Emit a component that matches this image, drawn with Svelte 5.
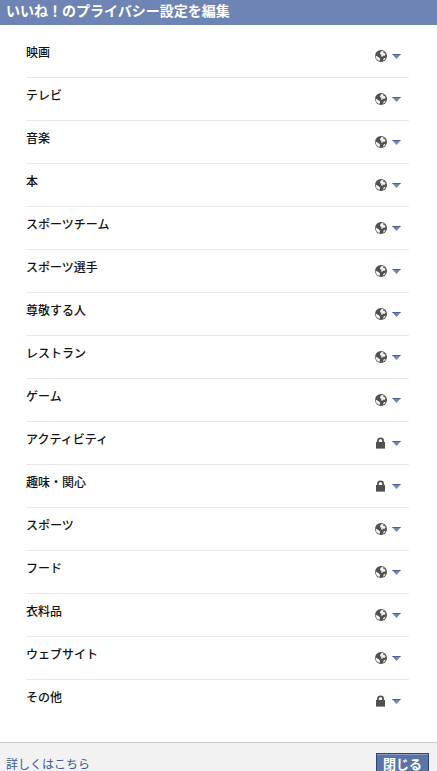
<script>
    const categories = [
        { name: "映画", audience: "public" },
        { name: "テレビ", audience: "public" },
        { name: "音楽", audience: "public" },
        { name: "本", audience: "public" },
        { name: "スポーツチーム", audience: "public" },
        { name: "スポーツ選手", audience: "public" },
        { name: "尊敬する人", audience: "public" },
        { name: "レストラン", audience: "public" },
        { name: "ゲーム", audience: "public" },
        { name: "アクティビティ", audience: "private" },
        { name: "趣味・関心", audience: "private" },
        { name: "スポーツ", audience: "public" },
        { name: "フード", audience: "public" },
        { name: "衣料品", audience: "public" },
        { name: "ウェブサイト", audience: "public" },
        { name: "その他", audience: "private" },
    ];
</script>

<div class="dialog">
    <h2>いいね！のプライバシー設定を編集</h2>
    <ul>
        {#each categories as category}
            <li>
                <span class="name">{category.name}</span>
                <button class="selector">
                    {#if category.audience === "public"}
                        <svg width="12" height="12" viewBox="0 0 12 12">
                            <circle cx="6" cy="6" r="6" fill="#505050" />
                            <path
                                d="M5.2 2.6 6.6 1 8.6 1.2 8 2.4 9.6 3 10.6 4.6 9.4 6 7.6 5.6 7.4 7 6 6.2 6.4 4.6 5 4.2Z M.5 5.6 2 6.2 4 7.4 5.2 8.8 4.4 11 2.6 10.2 1.2 8.4Z M8.6 8.4 10.6 7.8 9.6 9.8 8 10.8Z"
                                fill="#f4f4f4"
                            />
                        </svg>
                    {:else}
                        <svg width="12" height="12" viewBox="0 0 12 12">
                            <path d="M3 6V3.3Q3 1.4 5.5 1.4T8 3.3V6" fill="none" stroke="#505050" stroke-width="1.8" />
                            <rect x="1" y="5" width="9" height="6.6" fill="#505050" />
                        </svg>
                    {/if}
                    <svg width="9" height="5" viewBox="0 0 9 5">
                        <path d="M0 0H9L4.5 5Z" fill="#7085b5" />
                        <path d="M0 0H9L8 1H1Z" fill="#4a639c" />
                    </svg>
                </button>
            </li>
        {/each}
    </ul>
    <footer>
        <a href="#help">詳しくはこちら</a>
        <button class="close">閉じる</button>
    </footer>
</div>

<style>
    :global(body) {
        margin: 0;
        overflow: hidden;
    }

    .dialog {
        display: flex;
        flex-direction: column;
        box-sizing: border-box;
        height: 771px;
        overflow: hidden;
        background: #fff;
        color: #111;
        font-family: "Noto Sans CJK JP", sans-serif;
        font-size: 12px;
    }

    h2 {
        flex: none;
        height: 25px;
        margin: 0;
        padding-left: 6px;
        background: #6d84b4;
        color: #fff;
        font-size: 14px;
        line-height: 20px;
    }

    ul {
        flex: none;
        box-sizing: border-box;
        height: 717px;
        margin: 0;
        padding: 10px 28px 0 26px;
        list-style: none;
    }

    li {
        display: flex;
        justify-content: space-between;
        align-items: flex-start;
        box-sizing: border-box;
        height: 43px;
        border-bottom: 1px solid #e9e9e9;
    }

    li:last-child {
        border-bottom: none;
    }

    .name {
        padding-top: 7px;
        line-height: 20px;
        font-weight: 500;
    }

    button {
        font-family: inherit;
    }

    .selector {
        display: flex;
        align-items: center;
        gap: 5px;
        margin: 15px 8px 0 0;
        padding: 0;
        border: none;
        background: none;
    }

    footer {
        display: flex;
        flex: none;
        justify-content: space-between;
        align-items: flex-start;
        box-sizing: border-box;
        height: 29px;
        padding: 10px 8px 0 6px;
        border-top: 1px solid #c8c8c8;
        background: #f2f2f2;
    }

    a {
        padding-top: 1px;
        color: #3b5998;
        line-height: 20px;
        text-decoration: none;
    }

    .close {
        box-sizing: border-box;
        width: 53px;
        height: 22px;
        padding: 0;
        border: 1px solid #29447e;
        background: #5b74a8;
        box-shadow: inset 0 1px 0 #8a9cc2;
        color: #fff;
        font-size: 13px;
        font-weight: bold;
        line-height: 20px;
    }
</style>
